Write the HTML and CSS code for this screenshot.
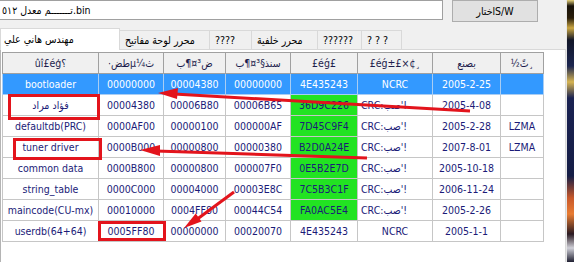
FILE: index.html
```html
<!DOCTYPE html>
<html>
  <head>
    <meta charset="UTF-8">
    <link rel="stylesheet" href="styles.css">
  </head>
  <body>
    <div class="window">
      <main>
        <div class="toolbar">
          <input class="path" value="تـــــــم معدل ٥١٢.bin" />
          <button class="btn">اختارS/W</button>
        </div>
        <ul class="tabs">
          <li class="active">مهندس هاني علي</li>
          <li class="tab-keys">محرر لوحة مفاتيح</li>
          <li class="tab-q4">????</li>
          <li class="tab-bg">محرر خلفية</li>
          <li class="tab-q6">??????</li>
          <li class="tab-q3">? ? ?</li>
        </ul>
        <div class="panel">
          <table class="list">
            <colgroup>
              <col style="width: 96px">
              <col style="width: 65px">
              <col style="width: 62px">
              <col style="width: 65px">
              <col style="width: 67px">
              <col style="width: 75px">
              <col style="width: 68px">
              <col style="width: 43px">
            </colgroup>
            <thead>
              <tr>
                <th>ûî£éģ؟</th>
                <th>·طضµ¼ث</th>
                <th>ض³¤¶ب</th>
                <th>سنذ§³¤¶ب</th>
                <th>£éǵ£</th>
                <th>£éǵ±£×¢¸</th>
                <th>بصنع</th>
                <th>½ثً¸</th>
              </tr>
            </thead>
            <tbody>
              <tr class="selected">
                <td>bootloader</td>
                <td>00000000</td>
                <td>00004380</td>
                <td>00000000</td>
                <td>4E435243</td>
                <td>NCRC</td>
                <td>2005-2-25</td>
                <td></td>
              </tr>
              <tr>
                <td>فؤاد مراد</td>
                <td>00004380</td>
                <td>00006B80</td>
                <td>00006B65</td>
                <td class="crc">36D9C226</td>
                <td class="crc-type">CRC:صب'!</td>
                <td>2005-4-08</td>
                <td></td>
              </tr>
              <tr>
                <td>defaultdb(PRC)</td>
                <td>0000AF00</td>
                <td>00000100</td>
                <td>000000AF</td>
                <td class="crc">7D45C9F4</td>
                <td class="crc-type">CRC:صب'!</td>
                <td>2005-2-28</td>
                <td>LZMA</td>
              </tr>
              <tr>
                <td>tuner driver</td>
                <td>0000B000</td>
                <td>00000800</td>
                <td>00000380</td>
                <td class="crc">B2D0A24E</td>
                <td class="crc-type">CRC:صب'!</td>
                <td>2007-8-01</td>
                <td>LZMA</td>
              </tr>
              <tr>
                <td>common data</td>
                <td>0000B800</td>
                <td>00000800</td>
                <td>000007F0</td>
                <td class="crc">0E5B2E7D</td>
                <td class="crc-type">CRC:صب'!</td>
                <td>2005-10-18</td>
                <td></td>
              </tr>
              <tr>
                <td>string_table</td>
                <td>0000C000</td>
                <td>00004000</td>
                <td>00003E8C</td>
                <td class="crc">7C5B3C1F</td>
                <td class="crc-type">CRC:صب'!</td>
                <td>2006-11-24</td>
                <td></td>
              </tr>
              <tr>
                <td>maincode(CU-mx)</td>
                <td>00010000</td>
                <td>0004FF80</td>
                <td>00044C54</td>
                <td class="crc">FA0AC5E4</td>
                <td class="crc-type">CRC:صب'!</td>
                <td>2005-2-26</td>
                <td></td>
              </tr>
              <tr>
                <td>userdb(64+64)</td>
                <td>0005FF80</td>
                <td>00000000</td>
                <td>00020070</td>
                <td>4E435243</td>
                <td>NCRC</td>
                <td>2005-1-1</td>
                <td></td>
              </tr>
            </tbody>
          </table>
        </div>
      </main>
      <div class="desktop"></div>
    </div>
    <!-- red marks drawn over the screenshot -->
    <svg class="marks" width="574" height="262" viewBox="0 0 574 262">
      <g fill="none" stroke="#e3141c" stroke-width="3">
        <rect x="9.5" y="95.5" width="89" height="23" />
        <rect x="14.5" y="139.5" width="86" height="19" />
        <rect x="99.5" y="222.5" width="65" height="17" />
        <line x1="470" y1="111" x2="174" y2="94" />
        <line x1="367" y1="158" x2="156" y2="151" />
        <line x1="234" y1="192" x2="196" y2="220" />
      </g>
      <g fill="#e3141c">
        <polygon points="158,93 178,88 177,99" />
        <polygon points="140,150 160,145 160,156" />
        <polygon points="184,228 201.5,221.6 195.7,213.4" />
      </g>
    </svg>
  </body>
</html>
```

FILE: styles.css
```css
html, body {
  width: 574px;
  height: 262px;
  margin: 0;
  padding: 0;
  overflow: hidden;
  background: #f0f0f0;
  font-family: "DejaVu Sans Condensed", "DejaVu Sans", sans-serif;
  font-size: 10.5px;
  color: #000;
}
* {
  box-sizing: border-box;
}
.window {
  display: flex;
  height: 262px;
}
main {
  width: 566px;
  display: flex;
  flex-direction: column;
}
.desktop {
  flex: 1;
  border-left: 1px solid #e6e6e6;
  background: linear-gradient(to bottom, #e6d27c 0, #18120a 6px, #2a1e0a 18px, #caa642 28px, #121628 40px, #1c2650 66px, #d6b452 82px, #1a2252 98px, #151d46 176px, #c8582a 198px, #e87c32 214px, #2a1a22 234px, #d0d0d8 248px, #202032 262px);
}

/* top row */
.toolbar {
  display: flex;
  align-items: flex-start;
  height: 28px;
}
.path {
  width: 443px;
  height: 20px;
  margin: 0;
  padding: 0 2px;
  border: 1px solid #a0a0a0;
  border-left: none;
  background: #fff;
  font: inherit;
  color: #000;
  outline: none;
}
.btn {
  width: 86px;
  height: 22px;
  margin-left: 9px;
  padding: 0;
  border: 1px solid #adadad;
  background: #e1e1e1;
  font: inherit;
  color: #000;
}

/* tabs */
.tabs {
  display: flex;
  align-items: flex-end;
  height: 22px;
  margin: 0;
  padding: 0;
  list-style: none;
  position: relative;
  z-index: 1;
}
.tabs li {
  height: 19px;
  margin: 0 0 1px -1px;
  padding: 0 5px;
  line-height: 19px;
  border: 1px solid #d9d9d9;
  border-bottom: none;
  background: #f0f0f0;
  white-space: nowrap;
}
.tabs li.active {
  width: 120px;
  height: 22px;
  margin: 0;
  padding-left: 3px;
  line-height: 20px;
  background: #fff;
}
.tab-keys {
  width: 91px;
}
.tab-q4 {
  width: 43px;
}
.tab-bg {
  width: 67px;
}
.tab-q6 {
  width: 45px;
}
.tab-q3 {
  width: 41px;
}

/* list view */
.panel {
  flex: 1;
  margin-top: -1px;
  padding: 2px 0 0 1px;
  background: #fff;
  border: 1px solid #d9d9d9;
  border-left-color: #b4b4b4;
  border-bottom: none;
}
.list {
  width: 541px;
  border-collapse: collapse;
  table-layout: fixed;
}
.list th {
  height: 21px;
  padding: 0;
  background: #f0f0f0;
  border: 1px solid #a0a0a0;
  font-weight: normal;
  color: #1c1c4c;
  white-space: nowrap;
  overflow: hidden;
}
.list td {
  height: 21px;
  padding: 0;
  border: 1px solid #c6c6c6;
  text-align: center;
  color: #1b1b78;
  white-space: nowrap;
  overflow: hidden;
}
.list td.crc {
  background: #22e322;
}
.list td.crc-type {
  text-align: left;
  padding-left: 3px;
}
.list tr.selected td {
  background: #3399ff;
  color: #fff;
  border-color: #a9cdf3;
}

.marks {
  position: absolute;
  left: 0;
  top: 0;
  pointer-events: none;
}
```
